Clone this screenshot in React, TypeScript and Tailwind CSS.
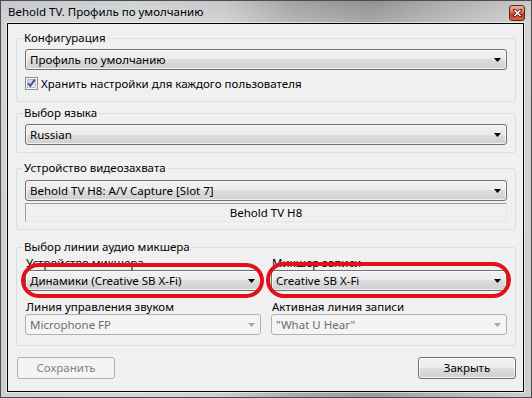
import React from "react";

function Arrow({ disabled }: { disabled?: boolean }) {
  return (
    <svg width="7" height="4" viewBox="0 0 7 4" className="shrink-0">
      <path d="M0 0H7L3.5 4Z" fill={disabled ? "#a6a6a6" : "#000"} />
    </svg>
  );
}

function Combo({ text, disabled }: { text: string; disabled?: boolean }) {
  return (
    <div
      className={
        disabled
          ? "flex h-[21px] items-center rounded-[3px] border border-[#adb2b5] bg-[#f4f4f4] pl-[4px] pr-[5px] text-[#6d6d6d]"
          : "flex h-[21px] items-center rounded-[3px] border border-[#707070] bg-[linear-gradient(180deg,#f2f2f2_0%,#ebebeb_50%,#dddddd_50%,#cfcfcf_100%)] pl-[4px] pr-[5px] text-black shadow-[inset_0_0_0_1px_rgba(255,255,255,0.7)]"
      }
    >
      <span className="flex-1 truncate leading-[15px]">{text}</span>
      <Arrow disabled={disabled} />
    </div>
  );
}

function CheckBox() {
  return (
    <svg width="13" height="13" viewBox="0 0 13 13" className="shrink-0">
      <defs>
        <linearGradient id="cbg" x1="0" y1="0" x2="1" y2="1">
          <stop offset="0" stopColor="#cbcfd5" />
          <stop offset="1" stopColor="#f6f6f6" />
        </linearGradient>
      </defs>
      <rect x="0.5" y="0.5" width="12" height="12" fill="#f6f6f6" stroke="#8e8f8f" />
      <rect x="2.5" y="2.5" width="8" height="8" fill="url(#cbg)" stroke="#b8bcc3" />
      <path d="M3.2 6.3 L5.4 8.8 L9.8 2.6" stroke="#3f5190" strokeWidth="1.9" fill="none" />
    </svg>
  );
}

function Legend({ children }: { children: React.ReactNode }) {
  return <legend className="ml-[-2px] px-[1px] text-[11.5px] leading-[16px] text-black">{children}</legend>;
}

export default function App() {
  return (
    <div className="h-[398px] w-[532px] overflow-hidden border border-[#4d4d4d] bg-[linear-gradient(180deg,rgba(255,255,255,0.05)_0%,rgba(255,255,255,0.25)_20px,rgba(255,255,255,0.15)_100%),linear-gradient(90deg,#c2c5c8_0%,#cdd0d2_25%,#c3c4c5_42%,#9d9d9d_55%,#8a8a8a_70%,#a4a4a4_82%,#c4c5c6_100%)] font-['Noto_Sans',sans-serif] text-[11.5px] text-black">
      <div className="flex h-[22px] items-start justify-between pl-[7px] pr-[6px]">
        <span className="mt-[3px] leading-[16px] text-black">Behold TV. Профиль по умолчанию</span>
        <div className="mt-[4px] flex h-[16px] w-[16px] items-center justify-center rounded-[3px] border border-[#5e2217] bg-[linear-gradient(180deg,#eab1a2_0%,#d97a62_45%,#c2391f_55%,#d4664a_100%)]">
          <svg width="9" height="8" viewBox="0 0 9 8">
            <path d="M1.5 1 L7.5 7 M7.5 1 L1.5 7" stroke="#5a1a10" strokeWidth="3" strokeLinecap="square" />
            <path d="M1.5 1 L7.5 7 M7.5 1 L1.5 7" stroke="#ffffff" strokeWidth="1.5" />
          </svg>
        </div>
      </div>

      <div className="ml-[6px] flex h-[369px] w-[517px] flex-col border border-black bg-[#f0f0f0] pl-[8px] pr-[7px] pt-[6px] shadow-[0_0_0_1px_rgba(255,255,255,0.55)]">
        <fieldset className="rounded-[3px] border border-[#d5dfe5] px-[8px] pb-[11px] pt-[3px]">
          <Legend>Конфигурация</Legend>
          <Combo text="Профиль по умолчанию" />
          <div className="mt-[7px] flex h-[13px] items-center gap-[3px]">
            <CheckBox />
            <span className="leading-[15px]">Хранить настройки для каждого пользователя</span>
          </div>
        </fieldset>

        <fieldset className="mt-[3px] rounded-[3px] border border-[#d5dfe5] px-[8px] pb-[7px] pt-[3px]">
          <Legend>Выбор языка</Legend>
          <Combo text="Russian" />
        </fieldset>

        <fieldset className="mt-[7px] rounded-[3px] border border-[#d5dfe5] px-[8px] pb-[7px] pt-[4px]">
          <Legend>Устройство видеозахвата</Legend>
          <Combo text="Behold TV H8: A/V Capture [Slot 7]" />
          <div className="mt-[2px] flex h-[19px] items-center justify-center border border-b-[#e8e8e8] border-l-[#a0a0a0] border-r-[#e8e8e8] border-t-[#a0a0a0] leading-[15px]">
            Behold TV H8
          </div>
        </fieldset>

        <fieldset className="relative mt-[9px] rounded-[3px] border border-[#d5dfe5] px-[8px] pb-[10px] pt-0">
          <Legend>Выбор линии аудио микшера</Legend>
          <div className="grid grid-cols-2 gap-x-[10px]">
            <div className="flex flex-col">
              <span className="pl-[1px] leading-[15px]">Устройство микшера</span>
              <Combo text="Динамики (Creative SB X-Fi)" />
              <span className="mt-[8px] pl-[1px] leading-[15px]">Линия управления звуком</span>
              <Combo text="Microphone FP" disabled />
            </div>
            <div className="flex flex-col">
              <span className="pl-[1px] leading-[15px]">Микшер записи</span>
              <Combo text="Creative SB X-Fi" />
              <span className="mt-[8px] pl-[1px] leading-[15px]">Активная линия записи</span>
              <Combo text={'"What U Hear"'} disabled />
            </div>
          </div>
          <div className="pointer-events-none absolute left-[4px] top-[8px] h-[35px] w-[243px] rounded-full border-[4px] border-[#e0101c]" />
          <div className="pointer-events-none absolute left-[249px] top-[7px] h-[36px] w-[245px] rounded-full border-[4px] border-[#e0101c]" />
        </fieldset>

        <div className="mt-[11px] flex justify-between">
          <div className="ml-[1px] flex h-[22px] w-[98px] items-center justify-center rounded-[3px] border border-[#adb2b5] bg-[#f4f4f4] text-[#838383]">
            Сохранить
          </div>
          <div className="flex h-[22px] w-[98px] items-center justify-center rounded-[3px] border border-[#707070] bg-[linear-gradient(180deg,#f2f2f2_0%,#ebebeb_50%,#dddddd_50%,#cfcfcf_100%)] shadow-[inset_0_0_0_1px_rgba(255,255,255,0.7)]">
            Закрыть
          </div>
        </div>
      </div>
    </div>
  );
}
